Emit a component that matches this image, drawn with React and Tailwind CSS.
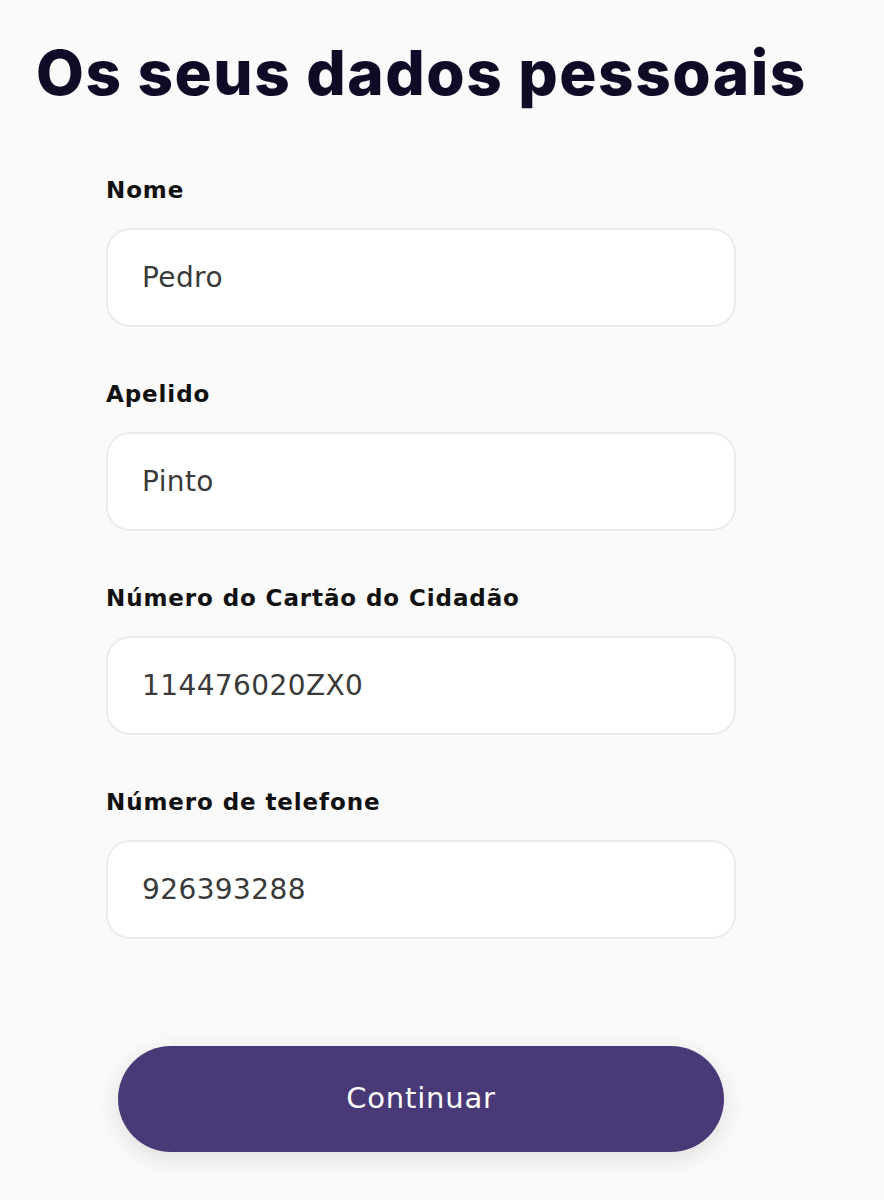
import React from 'react';

const fields = [
  { label: 'Nome', value: 'Pedro' },
  { label: 'Apelido', value: 'Pinto' },
  { label: 'Número do Cartão do Cidadão', value: '114476020ZX0' },
  { label: 'Número de telefone', value: '926393288' },
];

const wide = { fontFamily: '"DejaVu Sans", Verdana, sans-serif' };

const Field = ({ label, value }) => (
  <div className="flex flex-col">
    <label className="text-[23px] leading-[28px] font-bold text-[#111] tracking-[0.9px]" style={wide}>{label}</label>
    <div className="mt-[24px] h-[99px] rounded-[24px] border-2 border-[#ececec] bg-white flex items-center px-[34px]">
      <span className="text-[28px] text-[#3a3a3a] tracking-[0.4px]" style={wide}>{value}</span>
    </div>
  </div>
);

const App = () => {
  return (
    <div
      className="min-h-[1200px] w-[884px] bg-[#fafafa]"
      style={{ fontFamily: 'Inter, "Open Sans", sans-serif' }}
    >
      {/* Title */}
      <h1 className="pt-[36px] pl-[36px] text-[62px] leading-[74px] font-extrabold text-[#0e0b26] tracking-[1.5px]">
        Os seus dados pessoais
      </h1>

      {/* Form */}
      <div className="mt-[66px] ml-[106px] w-[630px] flex flex-col gap-[53px]">
        {fields.map((f) => (
          <Field key={f.label} label={f.label} value={f.value} />
        ))}
      </div>

      {/* Continue */}
      <div className="mt-[107px] ml-[118px]">
        <button
          className="w-[606px] h-[106px] rounded-full bg-[#4a3977] text-white text-[29px] tracking-[0.8px] shadow-[0_6px_24px_rgba(0,0,0,0.12)]"
          style={wide}
        >
          Continuar
        </button>
      </div>
    </div>
  );
};

export default App;
